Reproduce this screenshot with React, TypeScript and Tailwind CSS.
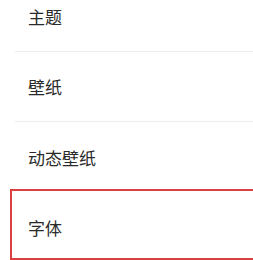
import React from "react";

export default function App() {
  const font = { fontFamily: '"Noto Sans CJK SC", "Noto Sans", sans-serif' };
  return (
    <div className="w-[253px] h-[260px] overflow-hidden bg-white" style={font}>
      <div className="-mt-[18px] flex flex-col">
        <div className="h-[70px] flex items-center text-[17px] text-[#2a2a2a] border-b border-[#ececec] ml-[15px] pl-[13px]">
          主题
        </div>
        <div className="h-[70px] flex items-center text-[17px] text-[#2a2a2a] border-b border-[#ececec] ml-[15px] pl-[13px]">
          壁纸
        </div>
        <div className="h-[67px] flex items-center text-[17px] text-[#2a2a2a] ml-[15px] pl-[13px] pt-[4px]">
          动态壁纸
        </div>
        <div className="h-[71px] ml-[10px] mr-[-10px] border-2 border-[#d9403f] flex items-center pl-[16px] pt-[6px] text-[17px] text-[#2a2a2a]">
          字体
        </div>
      </div>
    </div>
  );
}
